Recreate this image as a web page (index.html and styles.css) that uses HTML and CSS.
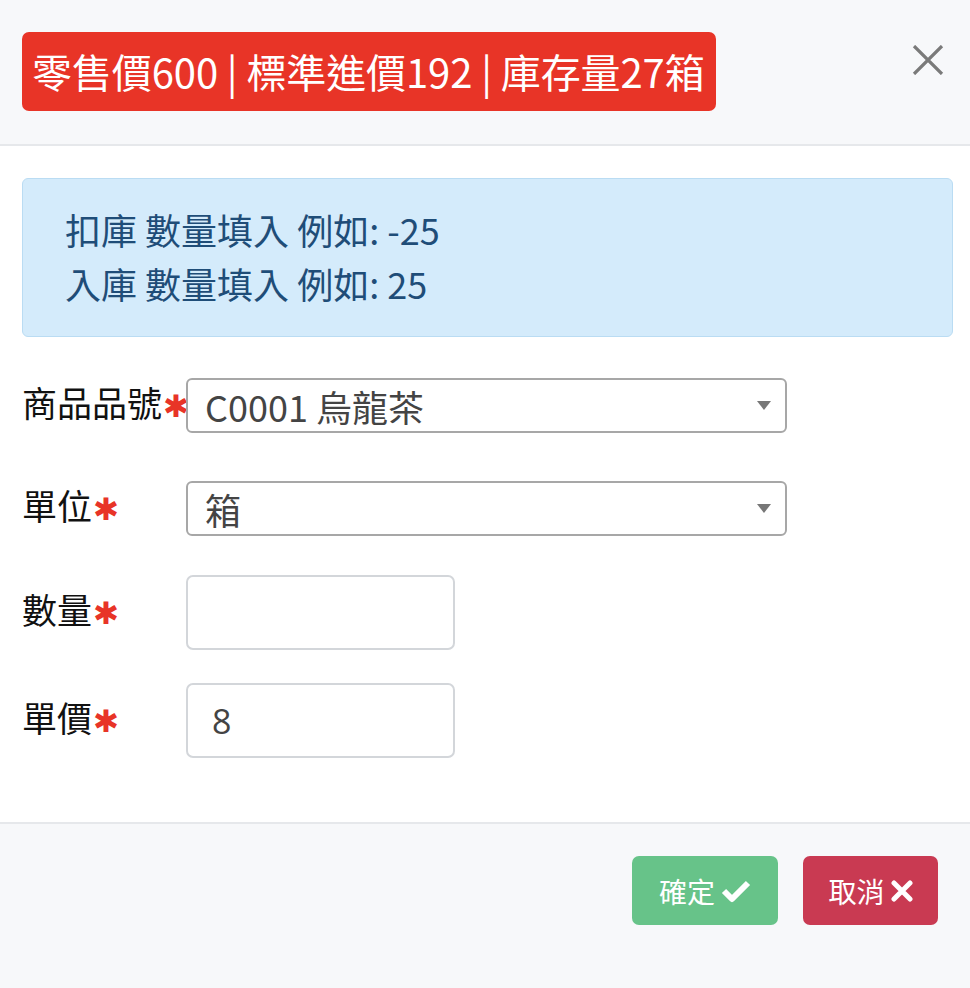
FILE: index.html
```html
<!DOCTYPE html>
<html lang="zh-Hant">
<head>
<meta charset="utf-8">
<link rel="stylesheet" href="styles.css">
</head>
<body>
<div class="modal">
  <header class="modal-header">
    <div class="badge">零售價600 | 標準進價192 | 庫存量27箱</div>
    <button class="close" aria-label="close">
      <svg width="34" height="30" viewBox="0 0 34 30"><path d="M3 1 L31 29 M31 1 L3 29" stroke="#7a7a7a" stroke-width="3.2" fill="none"/></svg>
    </button>
  </header>
  <main class="modal-body">
    <div class="alert">
      <div>扣庫 數量填入 例如: -25</div>
      <div>入庫 數量填入 例如: 25</div>
    </div>
    <div class="row row-1">
      <label class="label">商品品號<span class="req">✱</span></label>
      <div class="select wide"><span>C0001 烏龍茶</span><i class="caret"></i></div>
    </div>
    <div class="row row-2">
      <label class="label">單位<span class="req">✱</span></label>
      <div class="select wide"><span>箱</span><i class="caret"></i></div>
    </div>
    <div class="row row-3">
      <label class="label">數量<span class="req">✱</span></label>
      <div class="input"></div>
    </div>
    <div class="row row-4">
      <label class="label">單價<span class="req">✱</span></label>
      <div class="input"><span>8</span></div>
    </div>
  </main>
  <footer class="modal-footer">
    <button class="btn btn-ok"><span>確定</span>
      <svg width="30" height="24" viewBox="0 0 30 24"><path d="M3 12 L11 20 L27 4" stroke="#fff" stroke-width="6" fill="none" stroke-linejoin="round"/></svg>
    </button>
    <button class="btn btn-cancel"><span>取消</span>
      <svg width="22" height="22" viewBox="0 0 22 22"><path d="M3 3 L19 19 M19 3 L3 19" stroke="#fff" stroke-width="5" fill="none" stroke-linecap="round"/></svg>
    </button>
  </footer>
</div>
</body>
</html>
```
FILE: styles.css
```css
* { box-sizing: border-box; }
html, body { margin: 0; padding: 0; background: #fff; }
body {
  font-family: "Noto Sans CJK TC", "Noto Sans", sans-serif;
  width: 970px;
  height: 988px;
  overflow: hidden;
}
.modal { display: flex; flex-direction: column; height: 988px; }
.modal-header {
  background: #f7f8fa;
  border-bottom: 2px solid #e6e8eb;
  height: 146px;
  padding: 32px 22px 0 22px;
  display: flex;
  justify-content: space-between;
  align-items: flex-start;
}
.badge {
  background: #e83427;
  color: #fff;
  border-radius: 7px;
  height: 79px;
  width: 694px;
  font-size: 40px;
  line-height: 79px;
  padding-left: 10px;
  white-space: nowrap;
  letter-spacing: -0.1px;
}
.close {
  background: none;
  border: 0;
  padding: 0;
  margin: 13px 3px 0 0;
  width: 34px;
  height: 30px;
}
.close svg { display: block; }
.modal-body {
  background: #fff;
  padding: 32px 17px 0 22px;
  height: 676px;
}
.alert {
  background: #d4ebfb;
  border: 1px solid #badcf3;
  border-radius: 6px;
  height: 159px;
  padding: 23px 0 0 42px;
  color: #1f4d78;
  font-size: 36px;
  line-height: 54px;
}
.row { display: flex; align-items: center; }
.row-1 { margin-top: 41px; }
.row-2 { margin-top: 48px; }
.row-3 { margin-top: 39px; }
.row-4 { margin-top: 33px; }
.label {
  width: 164px;
  font-size: 35px;
  color: #111;
  white-space: nowrap;
  margin-top: -8px;
}
.req { color: #e83427; font-size: 31px; margin-left: 1px; }
.select {
  height: 55px;
  width: 601px;
  border: 2px solid #a7a7a7;
  border-radius: 6px;
  display: flex;
  align-items: center;
  justify-content: space-between;
  padding: 0 14px 0 17px;
  font-size: 36px;
  color: #444;
}
.caret {
  width: 0; height: 0;
  border-left: 7px solid transparent;
  border-right: 7px solid transparent;
  border-top: 9px solid #777;
}
.input {
  width: 269px;
  height: 75px;
  border: 2px solid #d3d6da;
  border-radius: 7px;
  display: flex;
  align-items: center;
  padding-left: 24px;
  font-size: 34px;
  color: #444;
  font-family: "Open Sans", "Noto Sans", sans-serif;
}
.modal-footer {
  background: #f7f8fa;
  border-top: 2px solid #e6e8eb;
  flex: 1;
  display: flex;
  justify-content: flex-end;
  align-items: flex-start;
  padding: 32px 32px 0 0;
  gap: 25px;
}
.btn {
  height: 69px;
  border: 0;
  border-radius: 7px;
  color: #fff;
  font-family: "Noto Sans CJK TC", sans-serif;
  font-size: 28px;
  display: flex;
  align-items: center;
  justify-content: center;
  gap: 6px;
  padding: 0;
  white-space: nowrap;
}
.btn-ok { background: #67c389; width: 146px; }
.btn-cancel { background: #c93a52; width: 135px; }
```
